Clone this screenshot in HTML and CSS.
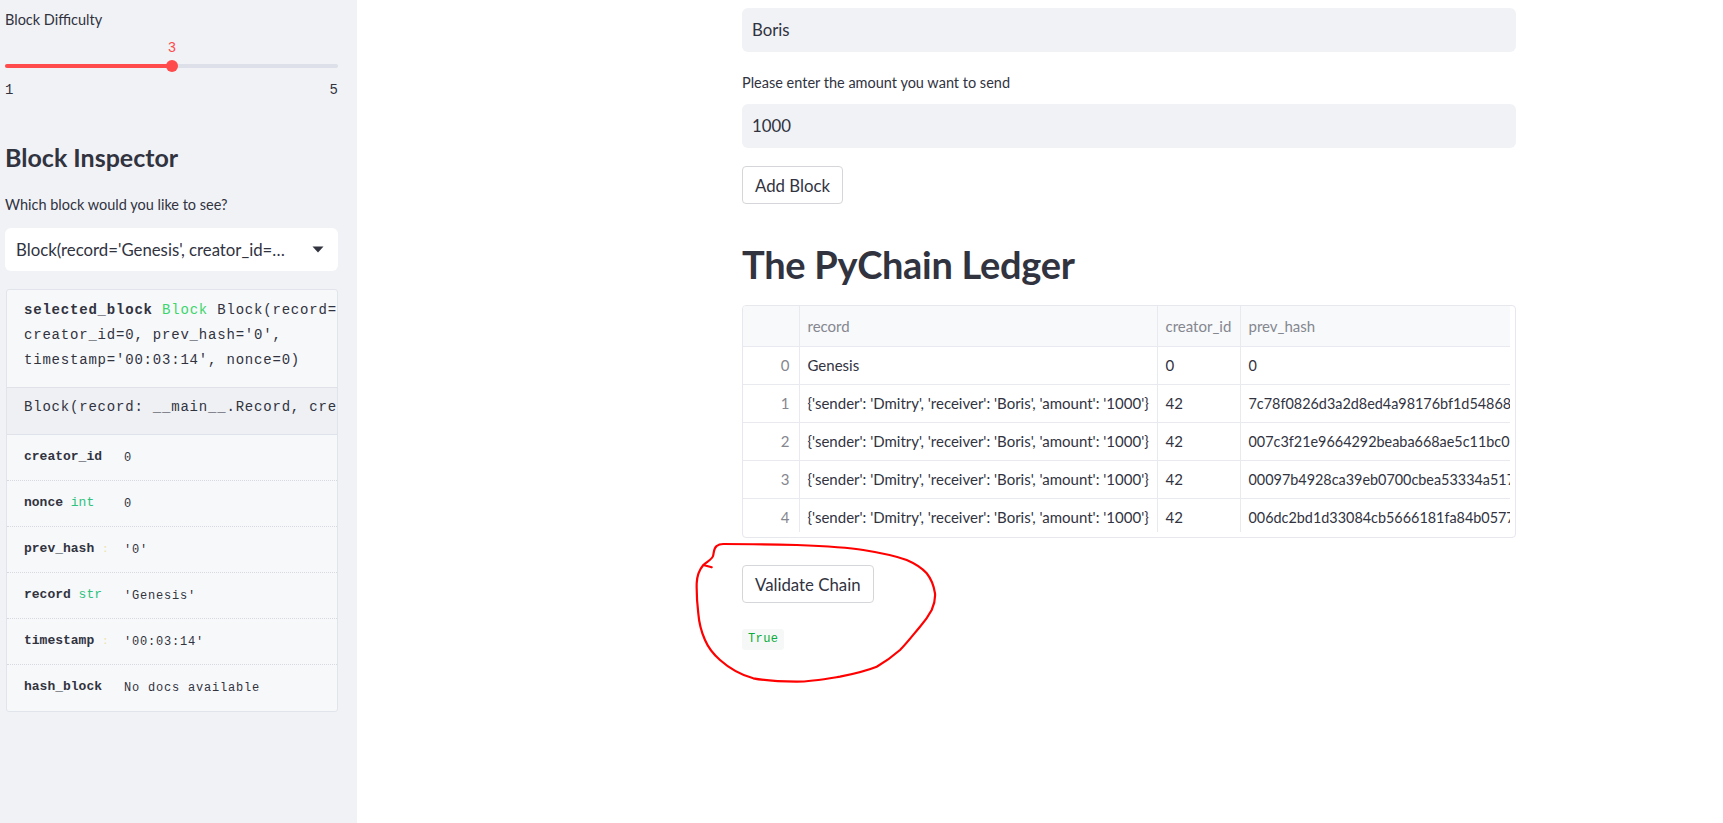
FILE: index.html
```html
<!DOCTYPE html>
<html>
<head>
<meta charset="utf-8">
<link rel="stylesheet" href="styles.css">
</head>
<body>
<div class="app">
  <aside class="sidebar">
    <div class="label lbl-difficulty">Block Difficulty</div>
    <div class="slider">
      <div class="slider-value">3</div>
      <div class="track">
        <div class="track-fill" style="width:50%"></div>
        <div class="thumb" style="left:50%"></div>
      </div>
      <div class="ticks"><span>1</span><span>5</span></div>
    </div>
    <h2 class="side-h">Block Inspector</h2>
    <div class="label lbl-which">Which block would you like to see?</div>
    <div class="select">
      <span class="select-text">Block(record='Genesis', creator_id=…</span>
      <svg class="caret" width="12" height="7" viewBox="0 0 12 7"><path d="M0.5 0.5 L11.5 0.5 L6 6.5 Z" fill="#31333f"/></svg>
    </div>
    <div class="help">
      <div class="help-head">
        <div class="hline"><span class="b">selected_block</span> <span class="grn">Block</span> Block(record='Genesis',</div>
        <div class="hline">creator_id=0, prev_hash='0',</div>
        <div class="hline">timestamp='00:03:14', nonce=0)</div>
      </div>
      <div class="help-sig">Block(record: __main__.Record, creator_id: int, prev_hash: str = '0', timestamp: str)</div>
      <div class="hrow"><span class="hname">creator_id</span><span class="hval">0</span></div>
      <div class="hrow"><span class="hname">nonce <span class="htype">int</span></span><span class="hval">0</span></div>
      <div class="hrow"><span class="hname">prev_hash <span class="hfaint">:</span></span><span class="hval">'0'</span></div>
      <div class="hrow"><span class="hname">record <span class="htype">str</span></span><span class="hval">'Genesis'</span></div>
      <div class="hrow"><span class="hname">timestamp <span class="hfaint">:</span></span><span class="hval">'00:03:14'</span></div>
      <div class="hrow last"><span class="hname">hash_block</span><span class="hval">No docs available</span></div>
    </div>
  </aside>
  <main class="main">
    <div class="input">Boris</div>
    <div class="label lbl-amount">Please enter the amount you want to send</div>
    <div class="input">1000</div>
    <button class="btn btn-add">Add Block</button>
    <h1 class="title">The PyChain Ledger</h1>
    <div class="table-wrap">
      <div class="table-clip">
        <table class="ledger">
          <colgroup>
            <col class="c-idx"><col class="c-rec"><col class="c-cre"><col class="c-hash">
          </colgroup>
          <thead>
            <tr><th></th><th>record</th><th>creator_id</th><th>prev_hash</th></tr>
          </thead>
          <tbody>
            <tr><td class="idx">0</td><td>Genesis</td><td>0</td><td class="hash">0</td></tr>
            <tr><td class="idx">1</td><td>{'sender': 'Dmitry', 'receiver': 'Boris', 'amount': '1000'}</td><td>42</td><td class="hash">7c78f0826d3a2d8ed4a98176bf1d5486893a0c4e1b2</td></tr>
            <tr><td class="idx">2</td><td>{'sender': 'Dmitry', 'receiver': 'Boris', 'amount': '1000'}</td><td>42</td><td class="hash">007c3f21e9664292beaba668ae5c11bc010f3a9d7e</td></tr>
            <tr><td class="idx">3</td><td>{'sender': 'Dmitry', 'receiver': 'Boris', 'amount': '1000'}</td><td>42</td><td class="hash">00097b4928ca39eb0700cbea53334a517a8e2f61c4</td></tr>
            <tr><td class="idx">4</td><td>{'sender': 'Dmitry', 'receiver': 'Boris', 'amount': '1000'}</td><td>42</td><td class="hash">006dc2bd1d33084cb5666181fa84b05771e9d03b5a</td></tr>
          </tbody>
        </table>
      </div>
    </div>
    <button class="btn btn-validate">Validate Chain</button>
    <div class="result"><code class="true">True</code></div>
  </main>
</div>
<svg class="scribble" width="1723" height="823" viewBox="0 0 1723 823">
  <path d="M711.7 567.3 L703.3 565 C708 561 713 559 713.3 555 C714 551 714 548 716.7 546 C719 544 721 544 723.3 544 C750 544 775 544.5 796.7 545 C822 546 845 547 863.3 550 C882 553 896 556 906.7 560 C916 564 922 568 926.7 573.3 C932 580 934 587 935 593.3 C935.5 600 934 605 931.7 610 C928 617 925 621 920 626.7 C913 635 907 643 900 650 C892 657 885 662 876.7 666.7 C866 671 853 674 840 676.7 C826 679 811 681.7 796.7 681.7 C781 681.5 767 681 753.3 678.3 C741 675 729 668 720 660 C712 653 708 647 705 640 C701 631 699 622 698.3 613.3 C697 603 696.5 593 696.7 583.3 C697 575 700 569 703.3 565" fill="none" stroke="#ff0000" stroke-width="2.2" stroke-linecap="round" stroke-linejoin="round"/>
</svg>
</body>
</html>
```

FILE: styles.css
```css
* { box-sizing: border-box; }
html, body { margin: 0; padding: 0; background: #ffffff; }
body {
  font-family: "Lato", "Source Sans Pro", "Liberation Sans", sans-serif;
  color: #31333f;
  width: 1723px;
  height: 823px;
  overflow: hidden;
  position: relative;
}
.app { display: flex; height: 823px; }

.sidebar {
  width: 357px;
  flex: none;
  background: #f0f2f6;
  padding: 0 19px 0 5px;
  display: flex;
  flex-direction: column;
}
.label { font-size: 14.5px; line-height: 20px; color: #31333f; }
.lbl-difficulty { margin-top: 10px; }

.slider { margin-top: 8px; }
.slider-value {
  color: #ff4b4b;
  font-size: 14px;
  line-height: 20px;
  text-align: center;
  width: 30px;
  margin-left: 152px;
  font-family: "Liberation Mono", monospace;
}
.track {
  position: relative;
  height: 4px;
  border-radius: 2px;
  background: #dde0e8;
  margin-top: 6px;
}
.track-fill { height: 4px; border-radius: 2px; background: #ff4b4b; }
.thumb {
  position: absolute;
  top: -4px;
  width: 12px;
  height: 12px;
  margin-left: -6px;
  border-radius: 50%;
  background: #ff4b4b;
}
.ticks {
  display: flex;
  justify-content: space-between;
  font-family: "Liberation Mono", monospace;
  font-size: 14px;
  line-height: 20px;
  margin-top: 12px;
}

.side-h {
  font-size: 25px;
  font-weight: 700;
  line-height: 32px;
  margin: 41px 0 0 0;
  color: #31333f;
}
.lbl-which { margin-top: 22px; }

.select {
  margin-top: 13px;
  height: 43px;
  background: #ffffff;
  border-radius: 6px;
  display: flex;
  align-items: center;
  padding: 0 14px 0 11px;
  gap: 16px;
}
.select-text {
  flex: 1;
  min-width: 0;
  font-size: 16.8px;
  white-space: nowrap;
  overflow: hidden;
  text-overflow: ellipsis;
}
.caret { flex: none; }

.help {
  margin-top: 18px;
  margin-left: 1px;
  background: #f7f8fa;
  border: 1px solid #e1e4ea;
  border-radius: 3px;
  overflow: hidden;
  font-family: "Liberation Mono", "DejaVu Sans Mono", monospace;
}
.help-head { padding: 8px 0 14px 17px; }
.hline {
  font-size: 14px;
  letter-spacing: 0.8px;
  line-height: 25px;
  white-space: nowrap;
  color: #31333f;
}
.hline .b { font-weight: 700; }
.grn { color: #3dd56d; }
.help-sig {
  border-top: 1px solid #dfe2e8;
  border-bottom: 1px solid #dfe2e8;
  background: #eef0f4;
  height: 48px;
  padding: 7px 0 0 17px;
  font-size: 14px;
  letter-spacing: 0.8px;
  line-height: 24px;
  white-space: nowrap;
}
.hrow {
  height: 46px;
  border-bottom: 1px dotted #d6d9e0;
  display: flex;
  align-items: center;
  padding-left: 17px;
  white-space: nowrap;
}
.hrow.last { border-bottom: none; }
.hname {
  width: 100px;
  overflow: hidden;
  font-size: 13px;
  font-weight: 700;
  color: #31333f;
  margin-top: -3px;
}
.htype { color: #2ec27e; font-weight: 400; }
.hfaint { color: #efe3a8; font-weight: 400; font-size: 11px; }
.hval {
  font-size: 12px;
  letter-spacing: 0.8px;
  color: #31333f;
}

.main {
  flex: 1;
  padding-left: 385px;
  padding-top: 8px;
  display: flex;
  flex-direction: column;
  align-items: flex-start;
}
.input {
  width: 774px;
  height: 44px;
  background: #f0f2f6;
  border-radius: 6px;
  font-size: 16.8px;
  line-height: 44px;
  padding-left: 10px;
}
.lbl-amount { margin-top: 21px; margin-bottom: 11px; }

.btn {
  font-family: inherit;
  font-size: 16.8px;
  color: #31333f;
  background: #ffffff;
  border: 1px solid #d5d6d9;
  border-radius: 4px;
  height: 38px;
  padding: 0 12px;
  margin: 0;
}
.btn-add { margin-top: 18px; }

.title {
  font-size: 38px;
  font-weight: 700;
  line-height: 52px;
  margin: 34px 0 0 0;
  color: #31333f;
  letter-spacing: -0.3px;
}

.table-wrap {
  margin-top: 15px;
  width: 774px;
  height: 233px;
  border: 1px solid #e6e8ed;
  border-radius: 4px;
  background: #ffffff;
  overflow: hidden;
}
.table-clip {
  width: 767px;
  height: 226px;
  overflow: hidden;
}
.ledger {
  border-collapse: collapse;
  table-layout: fixed;
  width: 1000px;
  font-size: 15px;
}
.c-idx { width: 56px; }
.c-rec { width: 358px; }
.c-cre { width: 83px; }
.c-hash { width: 503px; }
.ledger th, .ledger td {
  border-right: 1px solid #e8eaef;
  border-bottom: 1px solid #e8eaef;
  padding: 0 8px;
  text-align: left;
  white-space: nowrap;
  overflow: hidden;
  font-weight: 400;
}
.ledger th {
  height: 40px;
  background: #f8f9fb;
  color: #85878f;
}
.ledger td { height: 38px; color: #31333f; }
.ledger td.idx { text-align: right; color: #85878f; padding-right: 9px; }
.ledger td.hash { font-size: 14.4px; }

.btn-validate { margin-top: 27px; }
.result { margin-top: 23px; }
.true {
  display: inline-block;
  font-family: "Liberation Mono", monospace;
  font-size: 12px;
  letter-spacing: 0.4px;
  line-height: 21px;
  height: 21px;
  padding: 0 6px;
  color: #09ab3b;
  background: #f6f8f7;
  border-radius: 3px;
}

.scribble {
  position: absolute;
  left: 0;
  top: 0;
  pointer-events: none;
}
```
